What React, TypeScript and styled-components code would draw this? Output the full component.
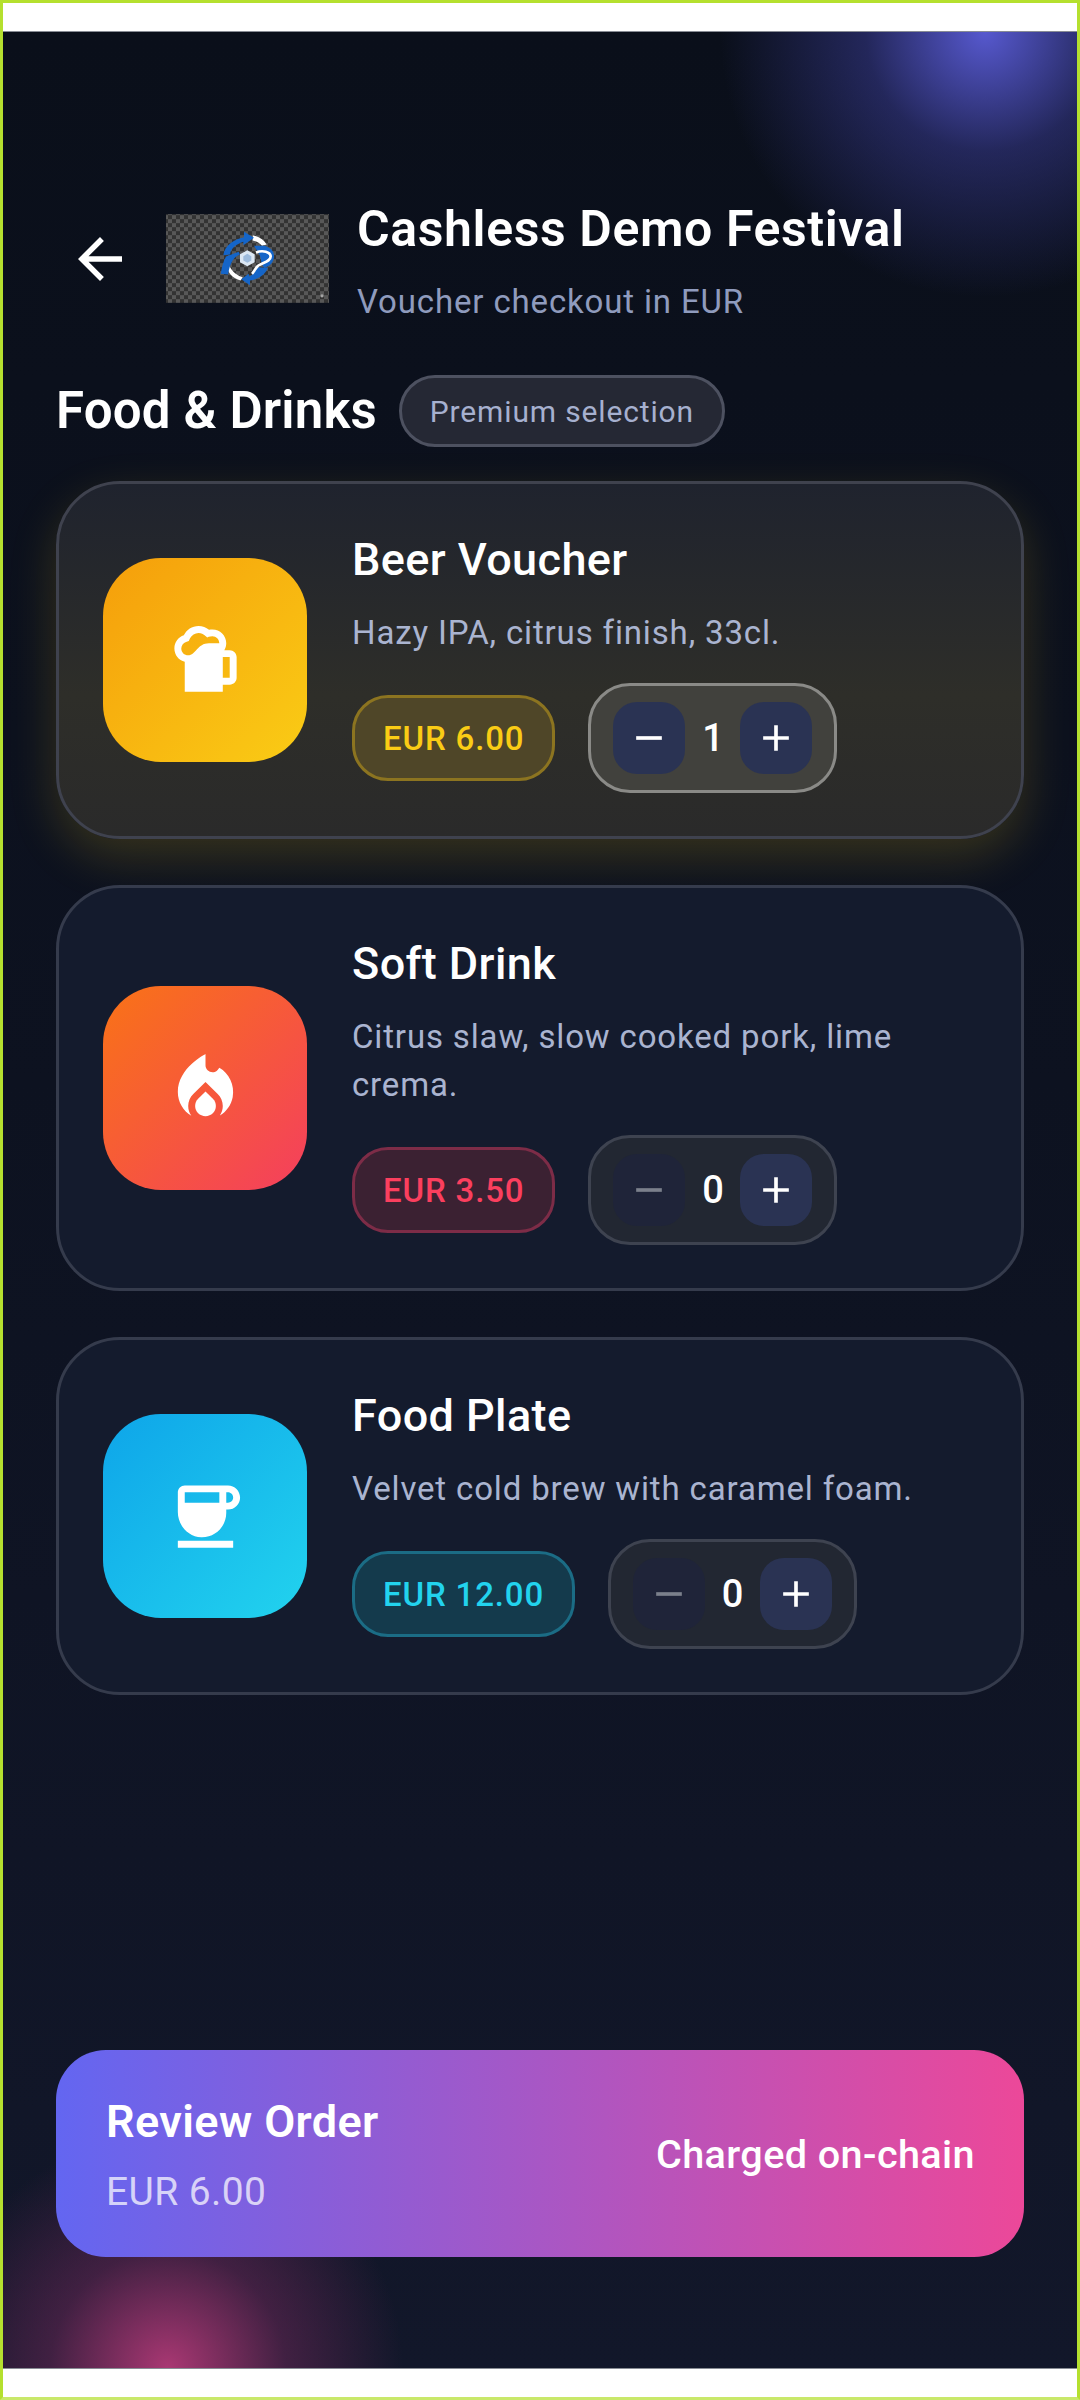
import React from "react";
import styled, { createGlobalStyle } from "styled-components";
import { MdAdd, MdArrowBack, MdCoffee, MdLocalFireDepartment, MdRemove, MdSportsBar } from "react-icons/md";

interface Product {
  name: string;
  description: string;
  price: string;
  priceColor: string;
  priceBg: string;
  priceBorder: string;
  gradient: string;
  icon: React.ReactNode;
  quantity: number;
}

const products: Product[] = [
  {
    name: "Beer Voucher",
    description: "Hazy IPA, citrus finish, 33cl.",
    price: "EUR 6.00",
    priceColor: "#facc15",
    priceBg: "#4f4628",
    priceBorder: "#8c7420",
    gradient: "linear-gradient(135deg, #f59e0b, #facc15)",
    icon: <MdSportsBar size={83} />,
    quantity: 1,
  },
  {
    name: "Soft Drink",
    description: "Citrus slaw, slow cooked pork, lime crema.",
    price: "EUR 3.50",
    priceColor: "#fb3f5e",
    priceBg: "#3b2132",
    priceBorder: "#7d2c47",
    gradient: "linear-gradient(135deg, #f97316, #f43f5e)",
    icon: <MdLocalFireDepartment size={83} />,
    quantity: 0,
  },
  {
    name: "Food Plate",
    description: "Velvet cold brew with caramel foam.",
    price: "EUR 12.00",
    priceColor: "#22d3ee",
    priceBg: "#143a4c",
    priceBorder: "#1b6c85",
    gradient: "linear-gradient(135deg, #0ea5e9, #22d3ee)",
    icon: <MdCoffee size={83} />,
    quantity: 0,
  },
];

const Logo = () => (
  <LogoBox viewBox="78 45 489 266" aria-label="Festival logo">
    <defs>
      <pattern id="checker" width="24" height="24" patternUnits="userSpaceOnUse">
        <rect width="24" height="24" fill="#333333" />
        <rect width="12" height="12" fill="#585858" />
        <rect x="12" y="12" width="12" height="12" fill="#585858" />
      </pattern>
    </defs>
    <rect x="78" y="45" width="489" height="266" fill="url(#checker)" />
    <path d="M338 108 C358 112 372 122 380 136 L366 140 C358 130 348 126 338 124 Z" fill="#fff" />
    <path d="M266 192 C270 210 284 226 308 234 L302 244 C278 238 262 222 262 200 Z" fill="#fff" />
    <path
      d="M250 168 C254 138 282 120 312 114 L312 98 L342 116 L310 138 L310 128 C288 136 272 148 270 166 Z"
      fill="#1565c8"
    />
    <path d="M258 172 L296 158 L300 166 C282 172 270 190 264 226 L242 224 C246 202 250 186 258 172 Z" fill="#1565c8" />
    <path d="M342 140 L372 140 C392 144 404 158 402 176 C398 196 384 204 372 206 L366 196 L360 170 Z" fill="#1565c8" />
    <path
      d="M352 204 L384 206 C376 226 356 240 330 244 L330 258 L304 240 L326 224 L328 232 C340 226 348 216 352 204 Z"
      fill="#1565c8"
    />
    <path
      d="M348 160 C368 152 392 158 392 172 C392 188 366 190 354 200 C346 206 344 216 336 224"
      fill="none"
      stroke="#fff"
      strokeWidth="8"
    />
    <polygon points="322,153 344,165 344,189 322,201 300,189 300,165" fill="#dbe7f3" />
    <polygon points="322,164 334,171 334,184 322,191 310,184 310,171" fill="#9dbbdc" />
    <circle cx="546" cy="290" r="5" fill="#a6a6a6" />
  </LogoBox>
);

const ProductCard = ({ product }: { product: Product }) => {
  const active = product.quantity > 0;
  return (
    <Card $active={active}>
      <IconTile $gradient={product.gradient}>{product.icon}</IconTile>
      <CardBody>
        <CardTitle>{product.name}</CardTitle>
        <CardDescription>{product.description}</CardDescription>
        <CardFooter>
          <PricePill $color={product.priceColor} $bg={product.priceBg} $border={product.priceBorder}>
            {product.price}
          </PricePill>
          <Stepper $active={active}>
            <StepButton $muted={!active}>
              <MdRemove size={44} />
            </StepButton>
            <Count>{product.quantity}</Count>
            <StepButton>
              <MdAdd size={44} />
            </StepButton>
          </Stepper>
        </CardFooter>
      </CardBody>
    </Card>
  );
};

export default function App() {
  return (
    <>
      <GlobalStyle />
      <Frame>
        <SystemBar />
        <Screen>
          <Header>
            <BackButton>
              <MdArrowBack size={66} />
            </BackButton>
            <Logo />
            <HeaderText>
              <EventTitle>Cashless Demo Festival</EventTitle>
              <EventSubtitle>Voucher checkout in EUR</EventSubtitle>
            </HeaderText>
          </Header>
          <SectionRow>
            <SectionTitle>Food &amp; Drinks</SectionTitle>
            <SectionPill>Premium selection</SectionPill>
          </SectionRow>
          <CardList>
            {products.map((product) => (
              <ProductCard key={product.name} product={product} />
            ))}
          </CardList>
          <CheckoutBar>
            <CheckoutLeft>
              <CheckoutTitle>Review Order</CheckoutTitle>
              <CheckoutTotal>EUR 6.00</CheckoutTotal>
            </CheckoutLeft>
            <CheckoutNote>Charged on-chain</CheckoutNote>
          </CheckoutBar>
        </Screen>
        <SystemBar />
      </Frame>
    </>
  );
}

const GlobalStyle = createGlobalStyle`
  * {
    box-sizing: border-box;
  }

  body {
    margin: 0;
    background: #fff;
    font-family: "Roboto", "Liberation Sans", sans-serif;
  }
`;

const Frame = styled.div`
  width: 1080px;
  height: 2400px;
  border: 3px solid #b5e02f;
  border-bottom-color: #c9e86a;
  display: flex;
  flex-direction: column;
  background: #fff;
`;

const SystemBar = styled.div`
  height: 28px;
  flex-shrink: 0;
  background: #fff;
`;

const Screen = styled.main`
  flex: 1;
  display: flex;
  flex-direction: column;
  padding: 0 53px 111px;
  border-top: 1px solid #888c94;
  border-bottom: 1px solid #888c94;
  background:
    radial-gradient(circle 265px at 982px 0, rgba(88, 90, 210, 0.98), rgba(70, 72, 180, 0.42) 45%, rgba(40, 44, 110, 0) 100%),
    radial-gradient(circle 235px at 165px 100%, rgba(190, 60, 125, 0.88), rgba(130, 45, 100, 0.42) 50%, rgba(60, 30, 70, 0) 100%),
    linear-gradient(180deg, #0a0f1a, #0d1220 45%, #12172a);
`;

const Header = styled.header`
  display: flex;
  align-items: center;
  margin-top: 167px;
  height: 120px;
`;

const BackButton = styled.button`
  width: 66px;
  height: 66px;
  margin: 0 33px 0 11px;
  padding: 0;
  border: 0;
  background: none;
  color: #fff;
  flex-shrink: 0;
  display: flex;
`;

const LogoBox = styled.svg`
  width: 163px;
  height: 89px;
  flex-shrink: 0;
  margin-top: -2px;
`;

const HeaderText = styled.div`
  margin-left: 28px;
  padding-top: 4px;
  display: flex;
  flex-direction: column;
`;

const EventTitle = styled.h1`
  margin: 0;
  font-size: 50px;
  line-height: 56px;
  font-weight: 600;
  letter-spacing: 0.6px;
  color: #fff;
`;

const EventSubtitle = styled.p`
  margin: 25px 0 0;
  font-size: 33px;
  line-height: 40px;
  letter-spacing: 0.85px;
  color: #8f9bbd;
`;

const SectionRow = styled.div`
  display: flex;
  align-items: center;
  gap: 22px;
  margin-top: 56px;
`;

const SectionTitle = styled.h2`
  margin: 0;
  font-size: 51px;
  line-height: 56px;
  font-weight: 600;
  letter-spacing: 0.15px;
  color: #fff;
`;

const SectionPill = styled.span`
  height: 72px;
  padding: 0 28px;
  display: flex;
  align-items: center;
  border: 3px solid #4d5160;
  border-radius: 36px;
  background: #252834;
  font-size: 30px;
  letter-spacing: 0.85px;
  color: #a6b0cf;
`;

const CardList = styled.div`
  display: flex;
  flex-direction: column;
  gap: 46px;
  margin-top: 34px;
`;

const Card = styled.article<{ $active: boolean }>`
  display: flex;
  align-items: center;
  gap: 45px;
  padding: 43px 44px;
  border: 3px solid ${(p) => (p.$active ? "#3f424e" : "#353b4c")};
  border-radius: 64px;
  background: ${(p) =>
    p.$active ? "linear-gradient(180deg, #1f232e, #2e2e29 60%, #2a2a2a)" : "#141b2d"};
  box-shadow: ${(p) => (p.$active ? "0 18px 48px rgba(250, 204, 21, 0.18)" : "none")};
`;

const IconTile = styled.div<{ $gradient: string }>`
  width: 204px;
  height: 204px;
  flex-shrink: 0;
  border-radius: 58px;
  display: flex;
  align-items: center;
  justify-content: center;
  color: #fff;
  background: ${(p) => p.$gradient};
`;

const CardBody = styled.div`
  flex: 1;
  min-width: 0;
`;

const CardTitle = styled.h3`
  margin: 4px 0 0;
  font-size: 45px;
  line-height: 58px;
  font-weight: 500;
  letter-spacing: 0.4px;
  color: #fff;
`;

const CardDescription = styled.p`
  margin: 20px 0 26px;
  font-size: 33px;
  line-height: 48px;
  letter-spacing: 0.85px;
  color: #aab4d0;
`;

const CardFooter = styled.div`
  display: flex;
  align-items: center;
  gap: 33px;
`;

const PricePill = styled.span<{ $color: string; $bg: string; $border: string }>`
  height: 86px;
  padding: 0 28px;
  display: flex;
  align-items: center;
  border: 3px solid ${(p) => p.$border};
  border-radius: 36px;
  background: ${(p) => p.$bg};
  color: ${(p) => p.$color};
  font-size: 33px;
  font-weight: 500;
  letter-spacing: 0.85px;
`;

const Stepper = styled.div<{ $active: boolean }>`
  height: 110px;
  width: 249px;
  padding: 0 22px;
  display: flex;
  align-items: center;
  justify-content: space-between;
  border: 3px solid ${(p) => (p.$active ? "#8a8a87" : "#3e4350")};
  border-radius: 42px;
  background: ${(p) => (p.$active ? "#41413d" : "#222732")};
`;

const StepButton = styled.button<{ $muted?: boolean }>`
  width: 72px;
  height: 72px;
  padding: 0;
  border: 0;
  border-radius: 24px;
  display: flex;
  align-items: center;
  justify-content: center;
  background: ${(p) => (p.$muted ? "#1f2439" : "#2a3353")};
  color: ${(p) => (p.$muted ? "#7b808c" : "#fff")};
`;

const Count = styled.span`
  font-size: 38px;
  font-weight: 500;
  color: #fff;
`;

const CheckoutBar = styled.section`
  margin-top: auto;
  height: 207px;
  padding: 0 49px 0 50px;
  display: flex;
  align-items: center;
  justify-content: space-between;
  border-radius: 50px;
  background: linear-gradient(90deg, #6366f1, #ec4899);
`;

const CheckoutLeft = styled.div`
  display: flex;
  flex-direction: column;
`;

const CheckoutTitle = styled.h2`
  margin: 0;
  font-size: 45px;
  line-height: 56px;
  font-weight: 600;
  letter-spacing: 0.4px;
  color: #fff;
`;

const CheckoutTotal = styled.span`
  margin-top: 20px;
  font-size: 39px;
  line-height: 44px;
  letter-spacing: 0.4px;
  color: rgba(255, 255, 255, 0.72);
`;

const CheckoutNote = styled.span`
  margin-top: 2px;
  font-size: 39.6px;
  font-weight: 500;
  letter-spacing: 0.4px;
  color: #fff;
`;
